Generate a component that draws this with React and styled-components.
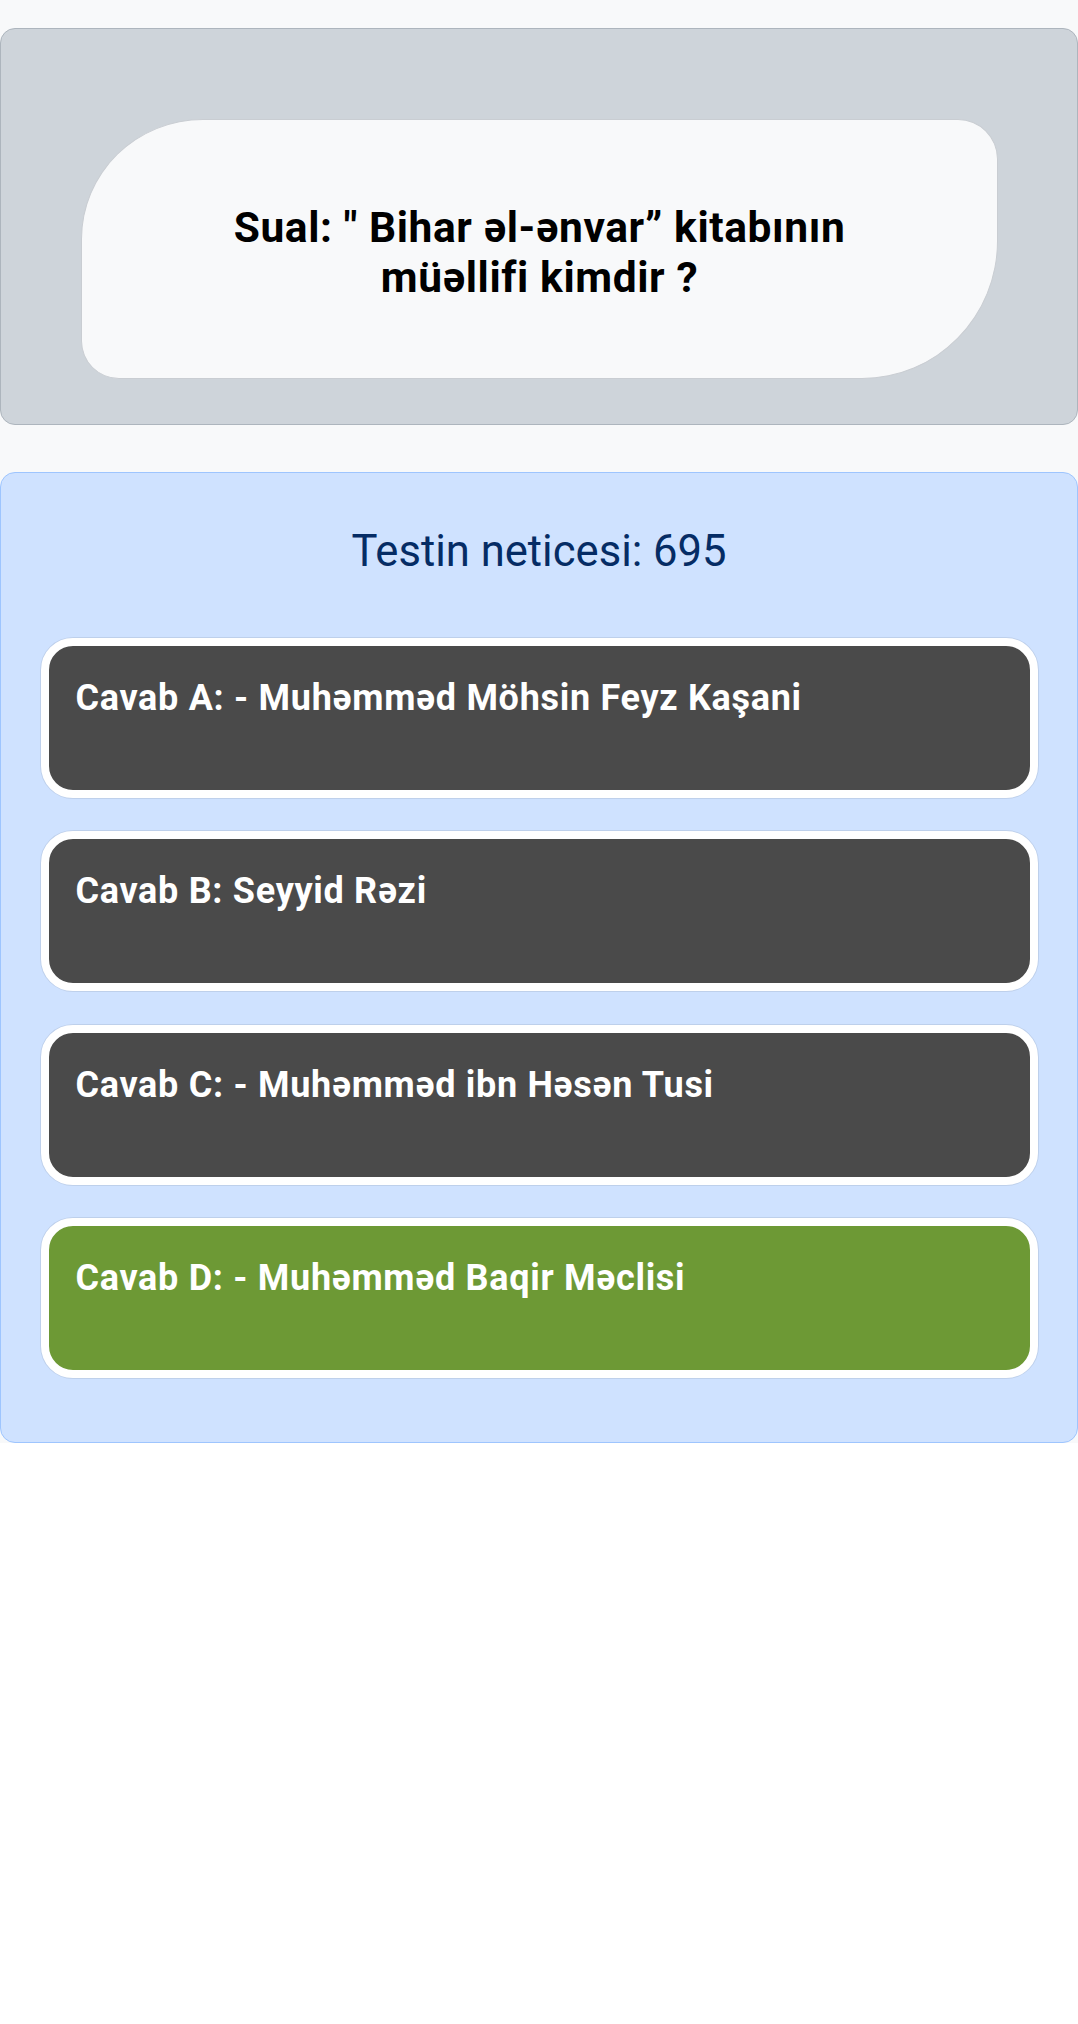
import React from "react";
import styled, { createGlobalStyle } from "styled-components";

const GlobalStyle = createGlobalStyle`
  html, body {
    margin: 0;
    padding: 0;
    background: #ffffff;
    font-family: Roboto, "Noto Sans", "Liberation Sans", Arial, sans-serif;
  }
  * { box-sizing: border-box; }
`;

const Page = styled.div`
  background: #f8f9fa;
  padding-top: 28px;
  display: flex;
  flex-direction: column;
  gap: 47px;
`;

const QuestionCard = styled.section`
  background: #ced4da;
  border: 1.5px solid #adb5bd;
  border-radius: 15px;
  padding: 90px 79px 45px 80px;
`;

const Bubble = styled.div`
  height: 260px;
  background: #f8f9fa;
  border: 1px solid #c9cdd2;
  border-radius: 122px 40px 136px 38px / 120px 40px 138px 38px;
  display: flex;
  align-items: center;
  justify-content: center;
  padding-top: 7px;
`;

const QuestionText = styled.h1`
  margin: 0;
  max-width: 700px;
  font-size: 42.5px;
  line-height: 50px;
  font-weight: 700;
  letter-spacing: 0.6px;
  color: #000000;
  text-align: center;
`;

const ResultCard = styled.section`
  background: #cfe2ff;
  border: 1.5px solid #9ec5fe;
  border-radius: 15px;
  padding: 52.5px 39.5px 64px 39.5px;
  display: flex;
  flex-direction: column;
`;

const Score = styled.h2`
  margin: 0 0 60px 0;
  font-size: 43.6px;
  line-height: 52px;
  font-weight: 400;
  color: #052c65;
  text-align: center;
`;

const AnswerList = styled.div`
  display: flex;
  flex-direction: column;
  gap: 33.5px;
`;

const Answer = styled.button`
  width: 100%;
  height: 160px;
  margin: 0;
  border: 8px solid #ffffff;
  border-radius: 32px;
  box-shadow: 0 0 0 1px rgba(0, 0, 0, 0.08);
  background: ${(p) => (p.$correct ? "#6d9935" : "#4a4a4a")};
  padding: 27px 27px;
  text-align: left;
  font-family: Roboto, "Noto Sans", "Liberation Sans", Arial, sans-serif;
  font-size: 36px;
  line-height: 51px;
  font-weight: 700;
  letter-spacing: 0.7px;
  color: #ffffff;
  cursor: pointer;
  display: flex;
  align-items: flex-start;
`;

const answers = [
  { id: "A", text: "Cavab A: - Muhəmməd Möhsin Feyz Kaşani" },
  { id: "B", text: "Cavab B: Seyyid Rəzi" },
  { id: "C", text: "Cavab C: - Muhəmməd ibn Həsən Tusi" },
  { id: "D", text: "Cavab D: - Muhəmməd Baqir Məclisi", correct: true },
];

export default function App() {
  return (
    <>
      <GlobalStyle />
      <Page>
        <QuestionCard>
          <Bubble>
            <QuestionText>Sual: " Bihar əl-ənvar” kitabının müəllifi kimdir ?</QuestionText>
          </Bubble>
        </QuestionCard>
        <ResultCard>
          <Score>Testin neticesi: 695</Score>
          <AnswerList>
            {answers.map((a) => (
              <Answer key={a.id} $correct={a.correct}>
                {a.text}
              </Answer>
            ))}
          </AnswerList>
        </ResultCard>
      </Page>
    </>
  );
}
